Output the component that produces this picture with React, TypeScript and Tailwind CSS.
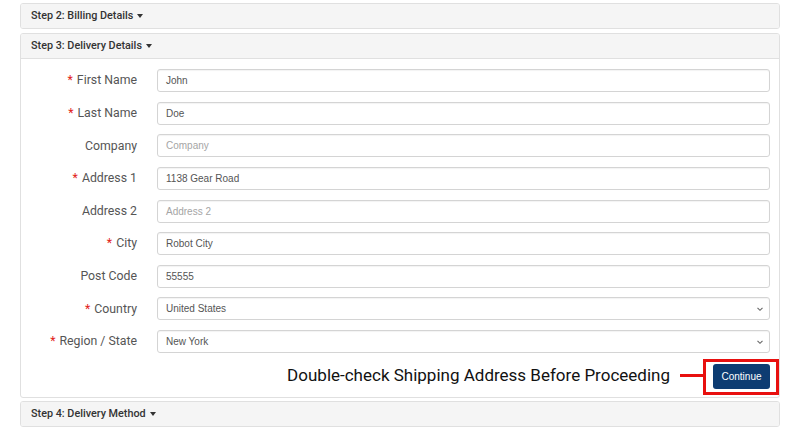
import { JSX } from 'react'

type Field = {
  label: string
  value?: string
  placeholder?: string
  required?: boolean
  select?: boolean
}

const fields: Field[] = [
  { label: 'First Name', value: 'John', required: true },
  { label: 'Last Name', value: 'Doe', required: true },
  { label: 'Company', placeholder: 'Company' },
  { label: 'Address 1', value: '1138 Gear Road', required: true },
  { label: 'Address 2', placeholder: 'Address 2' },
  { label: 'City', value: 'Robot City', required: true },
  { label: 'Post Code', value: '55555' },
  { label: 'Country', value: 'United States', required: true, select: true },
  { label: 'Region / State', value: 'New York', required: true, select: true }
]

function Caret(): JSX.Element {
  return (
    <span className="ml-[4px] inline-block h-0 w-0 border-x-[3.5px] border-t-[4px] border-x-transparent border-t-[#333]" />
  )
}

function PanelHeading(props: { title: string }): JSX.Element {
  return (
    <div className="flex h-[24px] items-center bg-[#f5f5f5] pl-[10px] text-[10.8px] font-medium text-[#333]">
      {props.title}
      <Caret />
    </div>
  )
}

function FormRow(props: { field: Field }): JSX.Element {
  const { label, value, placeholder, required, select } = props.field
  return (
    <>
      <label className="flex h-[23px] items-center justify-end text-[12.3px] text-[#555]">
        {required && <span className="mr-[4px] text-[#e2231a]">*</span>}
        {label}
      </label>
      <div className="flex h-[23px] items-center justify-between rounded-[3px] border border-[#d4d4d4] bg-white pl-[8px] pr-[5px] shadow-[inset_0_1px_1px_rgba(0,0,0,0.05)] font-['Liberation_Sans',Arial,sans-serif] text-[10px]">
        {value ? (
          <span className="text-[#555]">{value}</span>
        ) : (
          <span className="text-[#a5a5a5]">{placeholder}</span>
        )}
        {select && (
          <svg width="8" height="8" viewBox="0 0 8 8" className="text-[#666]">
            <path d="M1.5 2.8 4 5.3 6.5 2.8" fill="none" stroke="currentColor" strokeWidth="1.1" />
          </svg>
        )}
      </div>
    </>
  )
}

export default function App(): JSX.Element {
  return (
    <div className="h-[430px] w-[800px] overflow-hidden bg-white px-[20px] pt-[3px] font-['Roboto','Liberation_Sans',sans-serif]">
      <div className="mb-[4px] overflow-hidden rounded-[3px] border border-[#e0e0e0]">
        <PanelHeading title="Step 2: Billing Details" />
      </div>

      <div className="mb-[3px] overflow-hidden rounded-[3px] border border-[#e0e0e0]">
        <div className="border-b border-[#e0e0e0]">
          <PanelHeading title="Step 3: Delivery Details" />
        </div>
        <div className="pb-[9px] pr-[9px] pt-[10px]">
          <div className="grid grid-cols-[116px_1fr] gap-x-[20px] gap-y-[9.63px]">
            {fields.map((f) => (
              <FormRow key={f.label} field={f} />
            ))}
          </div>
          <div className="mt-[10px] flex h-[25px] items-center justify-end">
            <span className="text-[17px] text-[#111]">Double-check Shipping Address Before Proceeding</span>
            <span className="ml-[10px] h-[3px] w-[23px] bg-[#e8100f]" />
            <div className="relative ml-[10px]">
              <div className="absolute -bottom-[6px] -left-[10px] -right-[9px] -top-[4px] border-[3px] border-[#e8100f]" />
              <button className="h-[25px] w-[57px] rounded-[3px] bg-[#0d3c72] font-['Liberation_Sans',Arial,sans-serif] text-[10px] text-white">
                Continue
              </button>
            </div>
          </div>
        </div>
      </div>

      <div className="overflow-hidden rounded-[3px] border border-[#e0e0e0]">
        <PanelHeading title="Step 4: Delivery Method" />
      </div>
    </div>
  )
}
